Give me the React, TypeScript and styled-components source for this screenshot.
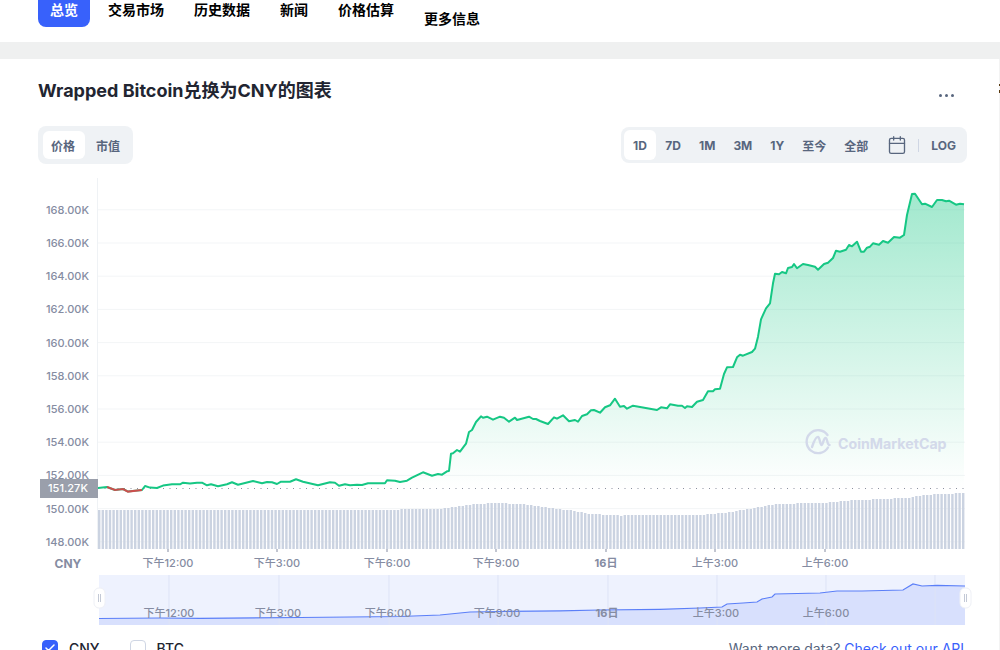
import React from "react";
import styled, { createGlobalStyle } from "styled-components";
import { Calendar, Check } from "lucide-react";

const FONT = `Inter, "Noto Sans CJK SC", sans-serif`;

const GlobalStyle = createGlobalStyle`
  html, body {
    margin: 0;
    padding: 0;
    height: 650px;
    overflow: hidden;
    background: #fff;
    font-family: ${FONT};
  }
`;

const Page = styled.div`
  position: relative;
  width: 1000px;
  height: 650px;
  overflow: hidden;
  background: #fff;
`;

// the edge of the next panel, which just shows at the right of the window
const NextPanelEdge = styled.div`
  position: absolute;
  top: 59px;
  right: 0;
  bottom: 0;
  width: 1px;
  background: #f3f3f3;

  &::before,
  &::after {
    content: "";
    position: absolute;
    left: 0;
    width: 1px;
    background: #5a3a10;
  }
  &::before {
    top: 25px;
    height: 2px;
  }
  &::after {
    top: 31px;
    height: 3px;
  }
`;

const Nav = styled.nav`
  display: flex;
  align-items: flex-start;
  gap: 6px;
  height: 49px;
  margin-top: -7px;
  padding-left: 38px;
  box-sizing: border-box;
`;

const NavItem = styled.a<{ $active?: boolean; $dropped?: boolean }>`
  display: block;
  height: 34px;
  line-height: 34px;
  padding: 0 12px;
  margin-top: ${(p) => (p.$dropped ? "9px" : "0")};
  border-radius: 8px;
  font-size: 14px;
  font-weight: 600;
  color: ${(p) => (p.$active ? "#fff" : "#000")};
  background: ${(p) => (p.$active ? "#3861fb" : "transparent")};
`;

const Band = styled.div`
  height: 17px;
  background: #eff0f0;
`;

const Card = styled.section`
  padding: 0 33px 0 38px;
`;

const TitleRow = styled.div`
  display: flex;
  align-items: center;
  justify-content: space-between;
  height: 62px;
`;

const Title = styled.h2`
  margin: -2px 0 0;
  font-size: 18px;
  font-weight: 700;
  color: #222531;
`;

const More = styled.div`
  display: flex;
  gap: 3px;
  margin: 10px 13px 0 0;
`;

const Dot = styled.span`
  width: 3px;
  height: 3px;
  border-radius: 50%;
  background: #58667e;
`;

const Controls = styled.div`
  display: flex;
  justify-content: space-between;
  align-items: flex-start;
  margin-top: 5px;
`;

const Switch = styled.div`
  display: flex;
  gap: 3px;
  padding: 5px 3px 5px 5px;
  height: 38px;
  box-sizing: border-box;
  background: #eff2f5;
  border-radius: 8px;
`;

const RangeBar = styled(Switch)`
  align-items: stretch;
  gap: 2px;
  height: 36px;
  padding: 3px;
  margin-top: 1px;
`;

const Pill = styled.span<{ $active?: boolean }>`
  display: flex;
  align-items: center;
  justify-content: center;
  padding: 0 8px;
  border-radius: 6px;
  font-size: 12px;
  font-weight: 700;
  color: #58667e;
  background: ${(p) => (p.$active ? "#fff" : "transparent")};
`;

const RangePill = styled(Pill)`
  padding: 0 ${(p) => (p.$active ? "9.5px" : "8px")};
  margin-right: ${(p) => (p.$active ? "-1px" : "0")};
`;

const TabPill = styled(Pill)`
  box-sizing: border-box;
  width: 42px;
  padding: 0 2px 0 0;
`;

const IconPill = styled(Pill)`
  padding: 0 7px 0 9px;
`;

const Divider = styled.span`
  align-self: center;
  width: 1px;
  height: 13px;
  margin: 0 2px;
  background: #cfd6e4;
`;

const ChartSvg = styled.svg`
  display: block;
  width: 1000px;
  height: 466px;
  margin: 14px 0 0 -38px;
`;

const AxisText = styled.text<{ $bold?: boolean }>`
  font-family: ${FONT};
  font-size: 11px;
  font-weight: ${(p) => (p.$bold ? 700 : 500)};
  fill: #858ca2;
`;

const UnitText = styled(AxisText)`
  font-size: 12px;
`;

const TagText = styled.text`
  font-family: ${FONT};
  font-size: 11px;
  font-weight: 500;
  fill: #fff;
`;

const WatermarkText = styled.text`
  font-family: ${FONT};
  font-size: 14.2px;
  font-weight: 700;
  fill: #d3d9ea;
`;

const Legend = styled.div`
  display: flex;
  align-items: center;
  height: 20px;
  margin-top: -6px;
  padding-right: 3px;
  font-size: 14px;
  color: #222531;
`;

const LegendCheck = styled.span<{ $on?: boolean }>`
  display: flex;
  align-items: center;
  justify-content: center;
  box-sizing: border-box;
  width: 16px;
  height: 16px;
  margin: 0 11px 0 4px;
  border-radius: 4px;
  border: 1px solid ${(p) => (p.$on ? "#3861fb" : "#cfd6e4")};
  background: ${(p) => (p.$on ? "#3861fb" : "#fff")};
`;

const LegendName = styled.span`
  margin-right: 26px;
  font-weight: 500;
`;

const ApiNote = styled.span`
  margin-left: auto;
  color: #58667e;
`;

const ApiLink = styled.a`
  color: #3861fb;
`;

// price curve read off the reference, in page pixels
const LINE: [number, number][] = [
  [98, 488], [107, 487], [115, 490], [123, 489], [128, 491.6], [142, 490], [145, 486], [150, 487.6],
  [157, 488], [163, 485.6], [172, 484.3], [180, 484.3], [183, 482.7], [190, 483.6], [197, 482.7],
  [202, 482.7], [207, 485.3], [211, 484.3], [218, 486.3], [227, 484.3], [232, 482.3], [238, 484.7],
  [253, 481], [262, 483.3], [267, 482], [272, 482.3], [277, 484], [281, 481.7], [290, 481.7],
  [296, 479.3], [303, 481.7], [318, 485.3], [330, 482.3], [335, 482.7], [339, 485.7], [345, 484.3],
  [350, 485.3], [357, 484.7], [362, 485], [368, 483.3], [385, 483.3], [387, 480.3], [395, 480.7],
  [400, 482], [407, 480.7], [412, 477.7], [423, 472.3], [432, 475.7], [438, 474], [442, 474.7],
  [447, 471.3], [449, 471], [451, 453.7], [453, 453.3], [457, 450], [460, 451.7], [466, 443.7],
  [469, 432], [472, 430], [476, 422], [481, 416.3], [483, 417.7], [487, 416.7], [493, 419.7],
  [500, 416.7], [504, 417.7], [509, 421.7], [515, 417.7], [517, 420], [529, 416.7], [533, 419],
  [536, 419], [540, 421], [548, 424], [554, 417.3], [557, 418.7], [563, 415.3], [569, 421.3],
  [575, 420], [578, 421.7], [582, 416], [587, 414.3], [591, 410.3], [594, 410], [600, 412.7],
  [605, 407.3], [610, 405.3], [615, 398.7], [620, 406.7], [624, 406], [627, 408.7], [633, 405.7],
  [657, 410], [661, 407.3], [667, 408.3], [670, 404.3], [678, 405.7], [682, 405.7], [685, 408],
  [687, 406.3], [692, 407], [697, 401.7], [703, 400], [708, 391.3], [713, 391.3], [715, 389.3],
  [720, 388.7], [724, 374], [727, 367.3], [733, 367], [737, 357.3], [740, 354.7], [743, 355.7],
  [752, 352], [755, 348.7], [758, 336.7], [761, 319.3], [766, 308.3], [770, 303.3], [773, 283.3],
  [775, 273.7], [779, 274.3], [782, 272], [786, 273.3], [788, 268], [792, 267], [794, 264],
  [797, 268.3], [803, 264], [808, 265], [815, 266.7], [818, 269.7], [824, 264], [828, 262.7],
  [833, 258], [836, 250.7], [840, 251.7], [846, 249.7], [849, 245], [852, 246.3], [857, 241.7],
  [861, 251.7], [864, 251.7], [867, 247.7], [870, 246.7], [873, 243.3], [879, 244.7], [883, 241],
  [888, 242.7], [894, 237], [900, 237.7], [904, 235], [907, 215], [912, 194], [915, 193.7],
  [922, 204.3], [925, 203.7], [932, 207], [937, 200], [942, 200], [946, 201.3], [949, 200.7],
  [956, 204.7], [960, 203.7], [964, 204.3],
];

const NAV_LINE: [number, number][] = [
  [99, 618.5], [160, 618], [200, 618.3], [300, 617.5], [400, 616.5], [440, 615], [470, 612], [500, 611.5],
  [560, 610.8], [600, 610], [660, 609.3], [700, 608], [722, 607], [727, 604], [743, 603], [757, 602],
  [762, 599], [772, 597], [775, 594], [820, 593], [837, 591], [862, 591], [903, 590], [913, 584],
  [922, 586], [937, 585.3], [965, 586],
];

const VOLUME: [number, number][] = [
  [98, 510], [400, 509.5], [440, 508.5], [470, 504.5], [490, 503], [520, 504], [545, 507.5], [570, 510.5],
  [590, 514], [620, 515.5], [700, 515], [730, 512], [765, 506], [775, 504], [825, 502.7],
  [845, 500.7], [880, 499], [905, 498], [925, 495], [940, 494], [965, 493],
];

const volumeTop = (x: number) => {
  for (let i = 1; i < VOLUME.length; i++) {
    const [x1, y1] = VOLUME[i];
    if (x <= x1) {
      const [x0, y0] = VOLUME[i - 1];
      return Math.round(y0 + ((y1 - y0) * (x - x0)) / (x1 - x0));
    }
  }
  return 493;
};

const bars = Array.from({ length: 241 }, (_, i) => 98 + i * 3.6);
const toPath = (pts: [number, number][]) => pts.map(([x, y]) => `${x},${y}`).join(" ");

const OFFSET = 178; // page y of the top of the chart svg

const Y_LABELS = ["168.00K", "166.00K", "164.00K", "162.00K", "160.00K", "158.00K", "156.00K", "154.00K", "152.00K", "150.00K", "148.00K"];
const X_LABELS: { x: number; t: string; bold?: boolean }[] = [
  { x: 168, t: "下午12:00" },
  { x: 277, t: "下午3:00" },
  { x: 387, t: "下午6:00" },
  { x: 496, t: "下午9:00" },
  { x: 606, t: "16日", bold: true },
  { x: 715, t: "上午3:00" },
  { x: 825, t: "上午6:00" },
];

function PriceChart() {
  return (
    <ChartSvg viewBox={`0 ${OFFSET} 1000 466`}>
      <defs>
        <linearGradient id="area" x1="0" y1="194" x2="0" y2="488" gradientUnits="userSpaceOnUse">
          <stop offset="0" stopColor="#16c784" stopOpacity="0.4" />
          <stop offset="1" stopColor="#16c784" stopOpacity="0" />
        </linearGradient>
      </defs>

      <line x1="97.5" y1="178" x2="97.5" y2="549" stroke="#eff2f5" />
      {Y_LABELS.map((label, i) => {
        const y = 209.8 + i * 33.2;
        return (
          <g key={label}>
            <line x1="98" x2="965" y1={y} y2={y} stroke="#f3f5f7" />
            <AxisText x="89" y={y + 4} textAnchor="end">{label}</AxisText>
          </g>
        );
      })}

      {bars.map((x) => (
        <rect key={x} x={x} y={volumeTop(x)} width="2.4" height={549 - volumeTop(x)} fill="#cbd3e1" />
      ))}

      <polygon points={`98,488.5 ${toPath(LINE)} 964,488.5`} fill="url(#area)" />
      <line x1="98" x2="965" y1="488.5" y2="488.5" stroke="#8a909e" strokeDasharray="1 5.5" />
      <polyline points={toPath(LINE)} fill="none" stroke="#16c784" strokeWidth="2" strokeLinejoin="round" />
      <polyline points={toPath(LINE.slice(1, 6))} fill="none" stroke="#ea3943" strokeWidth="2" opacity="0.85" />

      <rect x="40" y="479" width="58" height="19" fill="#9a9fab" />
      <TagText x="68" y="492" textAnchor="middle">151.27K</TagText>

      {/* CoinMarketCap watermark */}
      <g fill="none" stroke="#d3d9ea" strokeWidth="2.4" strokeLinecap="round">
        <path d="M827.5 435A11.500 11.500 0 1 0 828 447.500" />
        <path d="M812 447C814 441 816 436.500 818 437C820 437.500 820 445 821.500 445C823 445 823.500 438 825.500 438C827.500 438 827 445 829.500 445" />
      </g>
      <WatermarkText x="838" y="449">CoinMarketCap</WatermarkText>

      {X_LABELS.map(({ x, t, bold }) => (
        <g key={t}>
          <line x1={x} x2={x} y1="549" y2="552" stroke="#858ca2" />
          <AxisText x={x} y="567" textAnchor="middle" $bold={bold}>{t}</AxisText>
        </g>
      ))}
      <UnitText x="68" y="568" textAnchor="middle" $bold>CNY</UnitText>

      {/* range navigator */}
      <rect x="99" y="575" width="866" height="50" fill="#eef2fe" />
      <polygon points={`99,625 ${toPath(NAV_LINE)} 965,625`} fill="#d8e0fd" />
      {[169, 279, 389, 498, 608, 717, 826, 935].map((x) => (
        <line key={x} x1={x} x2={x} y1="575" y2="625" stroke="#dde3f6" />
      ))}
      <polyline points={toPath(NAV_LINE)} fill="none" stroke="#5b7ff8" strokeWidth="1.2" />
      {X_LABELS.map(({ x, t, bold }) => (
        <AxisText key={t} x={x + 1} y="617" textAnchor="middle" $bold={bold}>{t}</AxisText>
      ))}
      {[94, 960].map((x) => (
        <g key={x}>
          <rect x={x} y="588" width="11" height="20" rx="5" fill="#fff" stroke="#eef0f6" />
          <line x1={x + 4.5} x2={x + 4.5} y1="594" y2="602" stroke="#c3c9d6" />
          <line x1={x + 6.5} x2={x + 6.5} y1="594" y2="602" stroke="#c3c9d6" />
        </g>
      ))}
    </ChartSvg>
  );
}

const RANGES = ["1D", "7D", "1M", "3M", "1Y", "至今", "全部"];

export default function App() {
  return (
    <Page>
      <GlobalStyle />
      <Nav>
        <NavItem $active>总览</NavItem>
        <NavItem>交易市场</NavItem>
        <NavItem>历史数据</NavItem>
        <NavItem>新闻</NavItem>
        <NavItem>价格估算</NavItem>
        <NavItem $dropped>更多信息</NavItem>
      </Nav>
      <Band />
      <Card>
        <TitleRow>
          <Title>Wrapped Bitcoin兑换为CNY的图表</Title>
          <More>
            <Dot />
            <Dot />
            <Dot />
          </More>
        </TitleRow>
        <Controls>
          <Switch>
            <TabPill $active>价格</TabPill>
            <TabPill>市值</TabPill>
          </Switch>
          <RangeBar>
            {RANGES.map((r, i) => (
              <RangePill key={r} $active={i === 0}>{r}</RangePill>
            ))}
            <IconPill>
              <Calendar size={20} strokeWidth={1.6} />
            </IconPill>
            <Divider />
            <Pill>LOG</Pill>
          </RangeBar>
        </Controls>
        <PriceChart />
        <Legend>
          <LegendCheck $on>
            <Check size={12} color="#fff" strokeWidth={3} />
          </LegendCheck>
          <LegendName>CNY</LegendName>
          <LegendCheck />
          <LegendName>BTC</LegendName>
          <ApiNote>
            Want more data? <ApiLink>Check out our API</ApiLink>
          </ApiNote>
        </Legend>
      </Card>
      <NextPanelEdge />
    </Page>
  );
}
